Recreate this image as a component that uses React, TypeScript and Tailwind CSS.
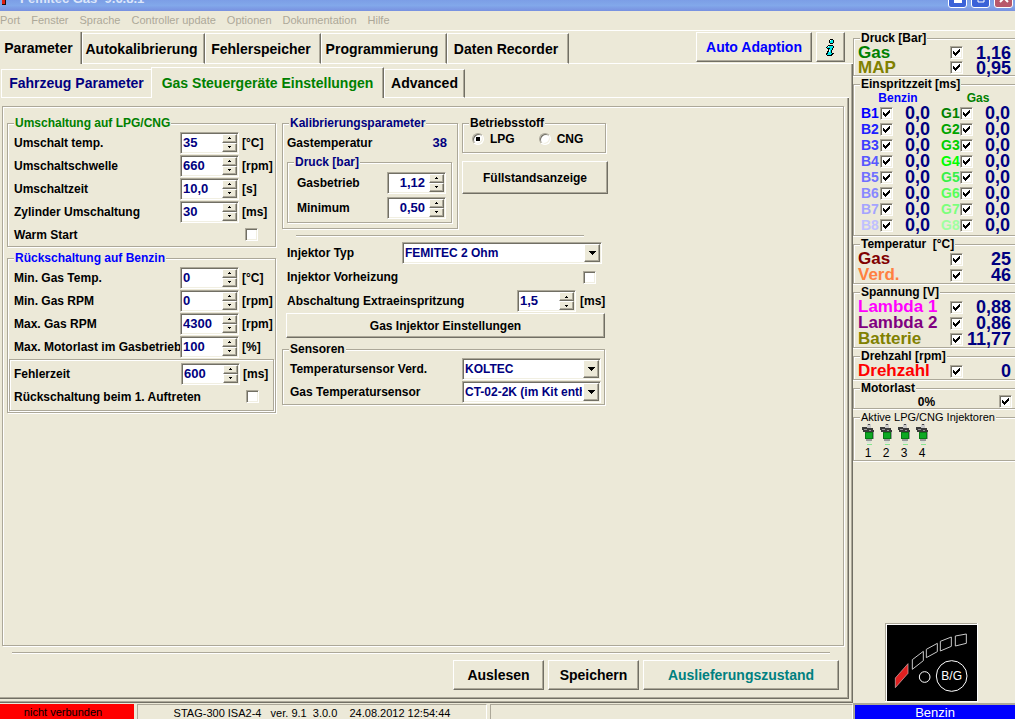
import { useState } from "react";
import type { ReactNode } from "react";
import { clsx } from "clsx";

const RAISED =
  "border border-t-white border-l-white border-r-[#716f64] border-b-[#716f64] shadow-[inset_-1px_-1px_0_#aca899]";
const SUNKEN =
  "border border-t-[#aca899] border-l-[#aca899] border-r-white border-b-white shadow-[inset_1px_1px_0_#716f64,inset_-1px_-1px_0_#f1efe2]";
const ETCHED = "border border-[#aca899] shadow-[1px_1px_0_#fff,inset_1px_1px_0_#fff]";

const MENU = ["Port", "Fenster", "Sprache", "Controller update", "Optionen", "Dokumentation", "Hilfe"];

const MAIN_TABS = [
  { label: "Parameter", width: "w-[82px]" },
  { label: "Autokalibrierung", width: "w-[123px]" },
  { label: "Fehlerspeicher", width: "w-[116px]" },
  { label: "Programmierung", width: "w-[126px]" },
  { label: "Daten Recorder", width: "w-[122px]" },
];

const SUB_TABS = [
  { label: "Fahrzeug Parameter", width: "w-[150px]", color: "text-[#000080]" },
  { label: "Gas Steuergeräte Einstellungen", width: "w-[233px]", color: "text-[#008000]" },
  { label: "Advanced", width: "w-[81px]", color: "text-black" },
];

const SWITCH_TO_GAS = [
  { label: "Umschalt temp.", value: "35", unit: "[°C]" },
  { label: "Umschaltschwelle", value: "660", unit: "[rpm]" },
  { label: "Umschaltzeit", value: "10,0", unit: "[s]" },
  { label: "Zylinder Umschaltung", value: "30", unit: "[ms]" },
];

const SWITCH_TO_PETROL = [
  { label: "Min. Gas Temp.", value: "0", unit: "[°C]" },
  { label: "Min. Gas RPM", value: "0", unit: "[rpm]" },
  { label: "Max. Gas RPM", value: "4300", unit: "[rpm]" },
  { label: "Max. Motorlast im Gasbetrieb", value: "100", unit: "[%]" },
];

const INJECTION = [
  { n: 1, petrol: "text-[#0000ff]", gas: "text-[#008000]" },
  { n: 2, petrol: "text-[#2020ff]", gas: "text-[#00a400]" },
  { n: 3, petrol: "text-[#3c3cff]", gas: "text-[#00d000]" },
  { n: 4, petrol: "text-[#5858ff]", gas: "text-[#00ff00]" },
  { n: 5, petrol: "text-[#7070ff]", gas: "text-[#38f048]" },
  { n: 6, petrol: "text-[#8888ff]", gas: "text-[#58ff58]" },
  { n: 7, petrol: "text-[#a4a4ff]", gas: "text-[#7cff7c]" },
  { n: 8, petrol: "text-[#c0c0ff]", gas: "text-[#a0ffa0]" },
];

function Group({
  title,
  color = "text-black",
  className,
  children,
}: {
  title: string;
  color?: string;
  className?: string;
  children: ReactNode;
}) {
  return (
    <fieldset className={clsx(ETCHED, "min-w-0", className)}>
      <legend className={clsx("ml-[6px] bg-[#ece9d8] px-px leading-4", color)}>{title}</legend>
      {children}
    </fieldset>
  );
}

function CheckBox({ id, label, checked = false }: { id?: string; label?: string; checked?: boolean }) {
  return (
    <span className="grid h-[13px] w-[13px] shrink-0">
      <input
        id={id}
        aria-label={label}
        type="checkbox"
        defaultChecked={checked}
        className={clsx(SUNKEN, "peer col-start-1 row-start-1 h-[13px] w-[13px] appearance-none bg-white")}
      />
      <svg
        viewBox="0 0 13 13"
        shapeRendering="crispEdges"
        className="pointer-events-none invisible z-10 col-start-1 row-start-1 h-[13px] w-[13px] peer-checked:visible"
      >
        <path d="M3 5h1v1h1v1h1v-1h1v-1h1v-1h1v-1h1v3h-1v1h-1v1h-1v1h-1v1h-1v-1h-1v-1h-1z" fill="#000" />
      </svg>
    </span>
  );
}

function SpinBox({ id, value, right = false }: { id: string; value: string; right?: boolean }) {
  const [text, setText] = useState(value);

  const step = (dir: number) => {
    const decimals = text.split(",")[1]?.length ?? 0;
    const next = Number(text.replace(",", ".")) + dir / 10 ** decimals;
    setText(next.toFixed(decimals).replace(".", ","));
  };

  return (
    <span className={clsx(SUNKEN, "flex h-[22px] w-[59px] shrink-0 bg-white p-px")}>
      <input
        id={id}
        value={text}
        onChange={(e) => setText(e.target.value)}
        className={clsx(
          "w-0 flex-1 bg-transparent text-[13px] leading-4 text-[#000080] outline-none",
          right ? "pr-1 text-right" : "pl-px"
        )}
      />
      <span className="flex w-[15px] flex-col bg-[#ece9d8]">
        <button
          type="button"
          aria-label="Erhöhen"
          onClick={() => step(1)}
          className={clsx(RAISED, "flex flex-1 items-center justify-center")}
        >
          <svg viewBox="0 0 3 2" shapeRendering="crispEdges" className="h-[2px] w-[3px]">
            <path d="M1 0h1v1h1v1H0V1h1z" />
          </svg>
        </button>
        <button
          type="button"
          aria-label="Verringern"
          onClick={() => step(-1)}
          className={clsx(RAISED, "flex flex-1 items-center justify-center")}
        >
          <svg viewBox="0 0 3 2" shapeRendering="crispEdges" className="h-[2px] w-[3px]">
            <path d="M0 0h3v1H2v1H1V1H0z" />
          </svg>
        </button>
      </span>
    </span>
  );
}

function SpinRow({ label, value, unit }: { label: string; value: string; unit: string }) {
  return (
    <div className="flex h-[23px] items-center">
      <label htmlFor={label} className="min-w-0 flex-1 whitespace-nowrap">
        {label}
      </label>
      <SpinBox id={label} value={value} />
      <span className="w-[33px] shrink-0 pl-[3px]">{unit}</span>
    </div>
  );
}

function CheckRow({ label }: { label: string }) {
  return (
    <div className="flex h-[23px] items-center">
      <label htmlFor={label} className="min-w-0 flex-1 whitespace-nowrap">
        {label}
      </label>
      <span className="w-[33px] shrink-0 pl-[6px]">
        <CheckBox id={label} />
      </span>
    </div>
  );
}

function DropDown({ id, options, className }: { id: string; options: string[]; className: string }) {
  return (
    <span className={clsx(SUNKEN, "grid h-[22px] shrink-0 bg-white p-px", className)}>
      <select
        id={id}
        className="col-start-1 row-start-1 min-w-0 appearance-none bg-transparent pl-px pr-[17px] text-[12px] leading-4 text-[#000080] outline-none"
      >
        {options.map((option) => (
          <option key={option}>{option}</option>
        ))}
      </select>
      <span
        className={clsx(
          RAISED,
          "pointer-events-none z-10 col-start-1 row-start-1 flex w-[16px] items-center justify-center justify-self-end bg-[#ece9d8]"
        )}
      >
        <svg viewBox="0 0 7 4" shapeRendering="crispEdges" className="h-1 w-[7px]">
          <path d="M0 0h7v1H6v1H5v1H4v1H3V3H2V2H1V1H0z" />
        </svg>
      </span>
    </span>
  );
}

function PushButton({ className, children }: { className?: string; children: ReactNode }) {
  return (
    <button type="button" className={clsx(RAISED, "flex items-center justify-center bg-[#ece9d8]", className)}>
      {children}
    </button>
  );
}

function InfoIcon() {
  return (
    <svg viewBox="0 0 9 17" className="h-[17px] w-[9px]" shapeRendering="crispEdges">
      <path d="M4 0h3v1h1v3H7v1H4V4H3V1h1zM2 6h5v1h1v2H7v2H6v3h2v1H7v1H6v1H1v-1H0v-2h1v-2h1v-2H1V9H0V8h1V7h1z" fill="#000" />
      <path d="M4 1h3v3H4zM2 7h5v2H6v2H5v3h1v1H5v1H1v-1h1v-2h1v-3h1V9H1V8h1z" fill="#00e8e8" />
      <path d="M4 1h1v1H4zM2 7h1v1H2zM3 11h1v2H3z" fill="#fff" />
    </svg>
  );
}

function InjectorIcon() {
  return (
    <svg viewBox="0 0 14 22" className="h-[22px] w-[14px]" shapeRendering="crispEdges">
      <path d="M6 0h4v4H6z" fill="#c8c8c8" />
      <path d="M7 0h2v1H7z" fill="#444" />
      <path d="M1 3h5v1h6v2h1v3H4V8H2V6H1z" fill="#3a3a3a" />
      <path d="M3 5h3v1H3zM8 6h2v1H8z" fill="#999" />
      <path d="M4 8h8v7H4z" fill="#067a14" />
      <path d="M5 9h6v5H5z" fill="#0da823" />
      <path d="M12 8h1v7h-1zM5 15h6v2H5z" fill="#999" />
      <path d="M6 17h4v2H6z" fill="#d8e4d8" />
      <path d="M6 20h5v1H6z" fill="#86e68f" />
    </svg>
  );
}

function LevelSwitch() {
  return (
    <svg viewBox="121 39 279 237" className="h-[79px] w-[93px]">
      <path d="M121 39h279v237H121z" fill="#fff" />
      <path d="M121 39h276v3H124v231h-3z" fill="#aca899" />
      <path d="M127 45h270v228H127z" fill="#000" />
      <path d="M152 204l38-43v29l-38 43z" fill="#e02020" stroke="#d8b8b8" strokeWidth="2" />
      <g fill="none" stroke="#c8c8c8" strokeWidth="3">
        <path d="M203 149l33-25v28l-33 26z" />
        <path d="M245 118l33-18v25l-33 18z" />
        <path d="M287 94l33-13v28l-33 14z" />
        <path d="M332 78l33-6v28l-33 8z" />
        <circle cx="240" cy="201" r="16" stroke="#fff" />
        <circle cx="321" cy="198" r="46" stroke="#fff" />
      </g>
      <text x="321" y="211" textAnchor="middle" fontSize="36" fontWeight="400" fill="#fff">
        B/G
      </text>
    </svg>
  );
}

function Gauge({ title, className, children }: { title: string; className?: string; children: ReactNode }) {
  return (
    <fieldset
      className={clsx(
        "mb-px min-w-0 border-y border-l border-[#aca899] shadow-[0_1px_0_#fff,inset_1px_1px_0_#fff]",
        className
      )}
    >
      <legend className="ml-[6px] whitespace-pre bg-[#ece9d8] px-px leading-[14px]">{title}</legend>
      {children}
    </fieldset>
  );
}

interface ReadingProps {
  label: string;
  color: string;
  value: string;
  height?: string;
}

function Reading({ label, color, value, height = "h-4" }: ReadingProps) {
  return (
    <div className={clsx("flex items-center pl-1 pr-1", height)}>
      <span className={clsx("w-[92px] whitespace-nowrap text-[17px] leading-4", color)}>{label}</span>
      <CheckBox label={label} checked />
      <span className="flex-1 text-right text-[18px] leading-4 text-[#000080]">{value}</span>
    </div>
  );
}

function Channel({ label, color }: { label: string; color: string }) {
  return (
    <div className="flex h-4 w-[80px] shrink-0 items-center">
      <span className={clsx("w-[19px] text-[14px] leading-4", color)}>{label}</span>
      <CheckBox label={label} checked />
      <span className="w-[37px] text-right text-[18px] leading-4 text-[#000080]">0,0</span>
    </div>
  );
}

function TitleBar() {
  const box = "flex h-5 w-[19px] items-end justify-center rounded-[3px] border border-white pb-1";

  return (
    <header className="flex h-[11px] shrink-0 items-end overflow-hidden bg-linear-to-b from-[#7c9ee6] via-[#82a8ea] to-[#7890e0] pl-[2px] pr-[2px]">
      <svg viewBox="0 0 4 10" className="mb-[6px] h-[10px] w-1">
        <path d="M0 0h3v10H0z" fill="#e02010" />
        <path d="M3 0h1v10H3zM0 9h4v1H0z" fill="#201010" />
      </svg>
      <h1 className="mb-1 flex-1 whitespace-pre pl-[14px] text-[13px] leading-4 text-[#dce6fa]">
        Femitec Gas  9.6.8.1
      </h1>
      <div className="mb-[3px] flex gap-1">
        <button type="button" aria-label="Minimieren" className={clsx(box, "bg-[#3a62d8]")}>
          <svg viewBox="0 0 8 3" className="h-[3px] w-2">
            <path d="M0 0h8v3H0z" fill="#fff" />
          </svg>
        </button>
        <button type="button" aria-label="Maximieren" className={clsx(box, "bg-[#3a62d8]")}>
          <svg viewBox="0 0 8 8" className="h-2 w-2">
            <path d="M1 1h6v6H1z" fill="none" stroke="#fff" />
          </svg>
        </button>
        <button type="button" aria-label="Schließen" className={clsx(box, "bg-[#b8586a]")}>
          <svg viewBox="0 0 10 10" className="h-[10px] w-[10px]">
            <path d="M1 1l8 8M9 1l-8 8" stroke="#fff" strokeWidth="2" />
          </svg>
        </button>
      </div>
    </header>
  );
}

function SettingsPanel() {
  return (
    <div className={clsx(ETCHED, "flex flex-1 items-start gap-[6px] pl-1 pt-2")}>
      <div className="flex w-[269px] shrink-0 flex-col gap-[3px]">
        <Group title="Umschaltung auf LPG/CNG" color="text-[#008000]">
          <div className="pl-[6px] pr-[3px]">
            {SWITCH_TO_GAS.map((row) => (
              <SpinRow key={row.label} {...row} />
            ))}
            <CheckRow label="Warm Start" />
          </div>
        </Group>
        <Group title="Rückschaltung auf Benzin" color="text-[#0000ff]" className="pb-px">
          <div className="pl-[6px] pr-[3px]">
            {SWITCH_TO_PETROL.map((row) => (
              <SpinRow key={row.label} {...row} />
            ))}
          </div>
          <div className={clsx(ETCHED, "mx-px mt-px py-[2px] pl-1")}>
            <SpinRow label="Fehlerzeit" value="600" unit="[ms]" />
            <CheckRow label="Rückschaltung beim 1. Auftreten" />
          </div>
        </Group>
      </div>

      <div className="w-[326px] shrink-0">
        <div className="flex items-start gap-1">
          <Group title="Kalibrierungsparameter" color="text-[#000080]" className="w-[176px] pb-[5px]">
            <div className="flex h-[23px] items-center justify-between pl-1 pr-[10px]">
              <span>Gastemperatur</span>
              <output className="text-[13px] text-[#000080]">38</output>
            </div>
            <Group title="Druck [bar]" color="text-[#000080]" className="ml-1 mr-[5px] pb-[2px]">
              <div className="flex h-[25px] items-center justify-between pl-[9px] pr-[5px]">
                <label htmlFor="gasbetrieb">Gasbetrieb</label>
                <SpinBox id="gasbetrieb" value="1,12" right />
              </div>
              <div className="flex h-[25px] items-center justify-between pl-[9px] pr-[5px]">
                <label htmlFor="minimum">Minimum</label>
                <SpinBox id="minimum" value="0,50" right />
              </div>
            </Group>
          </Group>
          <div className="flex flex-1 flex-col gap-2">
            <Group title="Betriebsstoff" className="mr-[2px]">
              <div className="flex h-[21px] items-start gap-6 pl-[9px]">
                {["LPG", "CNG"].map((fuel) => (
                  <label key={fuel} className="flex items-center gap-[6px]">
                    <input
                      type="radio"
                      name="fuel"
                      defaultChecked={fuel === "LPG"}
                      className={clsx(
                        SUNKEN,
                        "h-3 w-3 appearance-none rounded-full bg-white checked:bg-radial checked:from-black checked:from-30% checked:to-white checked:to-32%"
                      )}
                    />
                    {fuel}
                  </label>
                ))}
              </div>
            </Group>
            <PushButton className="h-[33px]">Füllstandsanzeige</PushButton>
          </div>
        </div>

        <hr className="ml-[14px] mr-6 mt-[6px] border-b border-t border-b-white border-t-[#aca899]" />

        <div className="mt-1 flex h-6 items-center pl-[5px] pr-[6px]">
          <label htmlFor="injektor-typ" className="flex-1">
            Injektor Typ
          </label>
          <DropDown id="injektor-typ" options={["FEMITEC 2 Ohm"]} className="w-[200px]" />
        </div>
        <div className="flex h-6 items-center pl-[5px] pr-3">
          <label htmlFor="vorheizung" className="flex-1">
            Injektor Vorheizung
          </label>
          <CheckBox id="vorheizung" />
        </div>
        <div className="flex h-6 items-center pl-[5px]">
          <label htmlFor="extraeinspritzung" className="flex-1">
            Abschaltung Extraeinspritzung
          </label>
          <SpinBox id="extraeinspritzung" value="1,5" />
          <span className="w-8 pl-1">[ms]</span>
        </div>
        <PushButton className="ml-1 h-[25px] w-[319px]">Gas Injektor Einstellungen</PushButton>

        <Group title="Sensoren" className="mr-[3px] mt-[3px] pb-px">
          <div className="flex h-[23px] items-center pl-[7px] pr-[3px]">
            <label htmlFor="sensor-verd" className="flex-1">
              Temperatursensor Verd.
            </label>
            <DropDown id="sensor-verd" options={["KOLTEC"]} className="w-[139px]" />
          </div>
          <div className="flex h-[23px] items-center pl-[7px] pr-[3px]">
            <label htmlFor="sensor-gas" className="flex-1">
              Gas Temperatursensor
            </label>
            <DropDown id="sensor-gas" options={["CT-02-2K (im Kit enthalten)"]} className="w-[139px]" />
          </div>
        </Group>
      </div>
    </div>
  );
}

function Sidebar() {
  return (
    <aside className="flex w-[162px] shrink-0 flex-col overflow-hidden">
      <Gauge title="Druck [Bar]">
        <Reading label="Gas" color="text-[#008000]" value="1,16" height="h-[15px]" />
        <Reading label="MAP" color="text-[#808000]" value="0,95" height="h-[15px]" />
      </Gauge>
      <Gauge title="Einspritzzeit [ms]" className="pb-[2px]">
        <div className="flex leading-[14px]">
          <span className="w-[88px] text-center text-[#0000ff]">Benzin</span>
          <span className="w-[72px] text-center text-[#008000]">Gas</span>
        </div>
        {INJECTION.map(({ n, petrol, gas }) => (
          <div key={n} className="flex pl-[7px]">
            <Channel label={`B${n}`} color={petrol} />
            <Channel label={`G${n}`} color={gas} />
          </div>
        ))}
      </Gauge>
      <Gauge title="Temperatur  [°C]">
        <Reading label="Gas" color="text-[#800000]" value="25" />
        <Reading label="Verd." color="text-[#ff8040]" value="46" />
      </Gauge>
      <Gauge title="Spannung [V]">
        <Reading label="Lambda 1" color="text-[#ff00ff]" value="0,88" />
        <Reading label="Lambda 2" color="text-[#800080]" value="0,86" />
        <Reading label="Batterie" color="text-[#808000]" value="11,77" />
      </Gauge>
      <Gauge title="Drehzahl [rpm]">
        <Reading label="Drehzahl" color="text-[#ff0000]" value="0" />
      </Gauge>
      <Gauge title="Motorlast">
        <div className="flex h-[13px] items-center pr-[3px]">
          <span className="flex-1 text-center">0%</span>
          <CheckBox label="Motorlast" checked />
        </div>
      </Gauge>
      <div className="text-[11px] font-normal">
        <Gauge title="Aktive LPG/CNG Injektoren">
          <div className="flex gap-1 pl-[7px]">
            {[1, 2, 3, 4].map((n) => (
              <div key={n} className="flex w-[14px] flex-col items-center text-[12px] leading-[14px]">
                <InjectorIcon />
                {n}
              </div>
            ))}
          </div>
        </Gauge>
      </div>
      <div className="mt-auto flex justify-center pr-[6px]">
        <LevelSwitch />
      </div>
      <div className="mt-px h-4 shrink-0 border-l-2 border-t-2 border-[#aca899] bg-[#0000ff] text-center text-[13px] font-normal leading-4 text-white">
        Benzin
      </div>
    </aside>
  );
}

export default function App() {
  const [mainTab, setMainTab] = useState("Parameter");
  const [subTab, setSubTab] = useState("Gas Steuergeräte Einstellungen");

  return (
    <div className="flex h-screen flex-col overflow-hidden bg-[#ece9d8] font-['Liberation_Sans',Arial,sans-serif] text-[12px] font-bold leading-4 text-black">
      <TitleBar />
      <nav className="flex h-5 shrink-0 items-center gap-[11px] border-b border-white pb-px text-[11px] font-normal text-[#aca899]">
        {MENU.map((item) => (
          <button key={item} type="button">
            {item}
          </button>
        ))}
      </nav>

      <div className="flex min-h-0 flex-1">
        <main className="flex min-w-0 flex-1 flex-col">
          <div role="tablist" className="flex h-[33px] shrink-0 items-end text-[14px]">
            {MAIN_TABS.map(({ label, width }) => (
              <button
                key={label}
                type="button"
                role="tab"
                aria-selected={label === mainTab}
                onClick={() => setMainTab(label)}
                className={clsx(
                  "shrink-0 whitespace-nowrap border-r border-r-[#716f64] pr-1 text-center shadow-[inset_-1px_0_0_#aca899]",
                  width,
                  label === mainTab ? "h-8" : "h-[31px] border-y border-l border-y-white border-l-white"
                )}
              >
                {label}
              </button>
            ))}
            <div className="flex h-full flex-1 items-start justify-end gap-1 border-b border-white pr-2 pt-px">
              <PushButton className="h-[30px] w-[116px] text-[#0000ff]">Auto Adaption</PushButton>
              <PushButton className="h-[30px] w-[29px]">
                <InfoIcon />
              </PushButton>
            </div>
          </div>

          <div className="flex min-h-0 flex-1 flex-col border-b border-r border-[#716f64] pb-[3px] pr-[3px] shadow-[inset_-1px_-1px_0_#aca899]">
            <div role="tablist" className="flex h-[34px] shrink-0 items-end pl-px text-[14px]">
              {SUB_TABS.map(({ label, width, color }) => (
                <button
                  key={label}
                  type="button"
                  role="tab"
                  aria-selected={label === subTab}
                  onClick={() => setSubTab(label)}
                  className={clsx(
                    "shrink-0 whitespace-nowrap border-l border-t border-white text-center",
                    width,
                    color,
                    label === subTab ? "h-[31px]" : "h-[29px] border-b pb-[2px]",
                    label !== "Fahrzeug Parameter" &&
                      "border-r border-r-[#716f64] shadow-[inset_-1px_0_0_#aca899]"
                  )}
                >
                  {label}
                </button>
              ))}
              <div className="h-full flex-1 border-b border-white" />
            </div>

            <div className="flex min-h-0 flex-1 flex-col border-b border-r border-[#716f64] pb-2 pl-[2px] pr-1 pt-2 shadow-[inset_-1px_-1px_0_#aca899]">
              <SettingsPanel />
              <hr className="ml-[10px] mr-[14px] mt-[6px] border-b border-t border-b-white border-t-[#aca899]" />
              <div className="mt-[6px] flex justify-end gap-1 pr-[5px] text-[14px]">
                <PushButton className="h-[30px] w-[91px]">Auslesen</PushButton>
                <PushButton className="h-[30px] w-[91px]">Speichern</PushButton>
                <PushButton className="h-[30px] w-[196px] text-[#008080]">Auslieferungszustand</PushButton>
              </div>
            </div>
          </div>

          <footer className="flex h-4 shrink-0 gap-[3px] pt-px text-[11px] font-normal leading-[17px]">
            <div className="w-[134px] bg-[#ff0000] pr-2 text-center">nicht verbunden</div>
            <div className="w-[350px] whitespace-pre border-l border-r border-t border-l-[#aca899] border-r-white border-t-[#aca899] text-center">
              STAG-300 ISA2-4   ver. 9.1  3.0.0    24.08.2012 12:54:44
            </div>
            <div className="flex-1 border-l border-r border-t border-l-[#aca899] border-r-white border-t-[#aca899]" />
          </footer>
        </main>
        <Sidebar />
      </div>
    </div>
  );
}
